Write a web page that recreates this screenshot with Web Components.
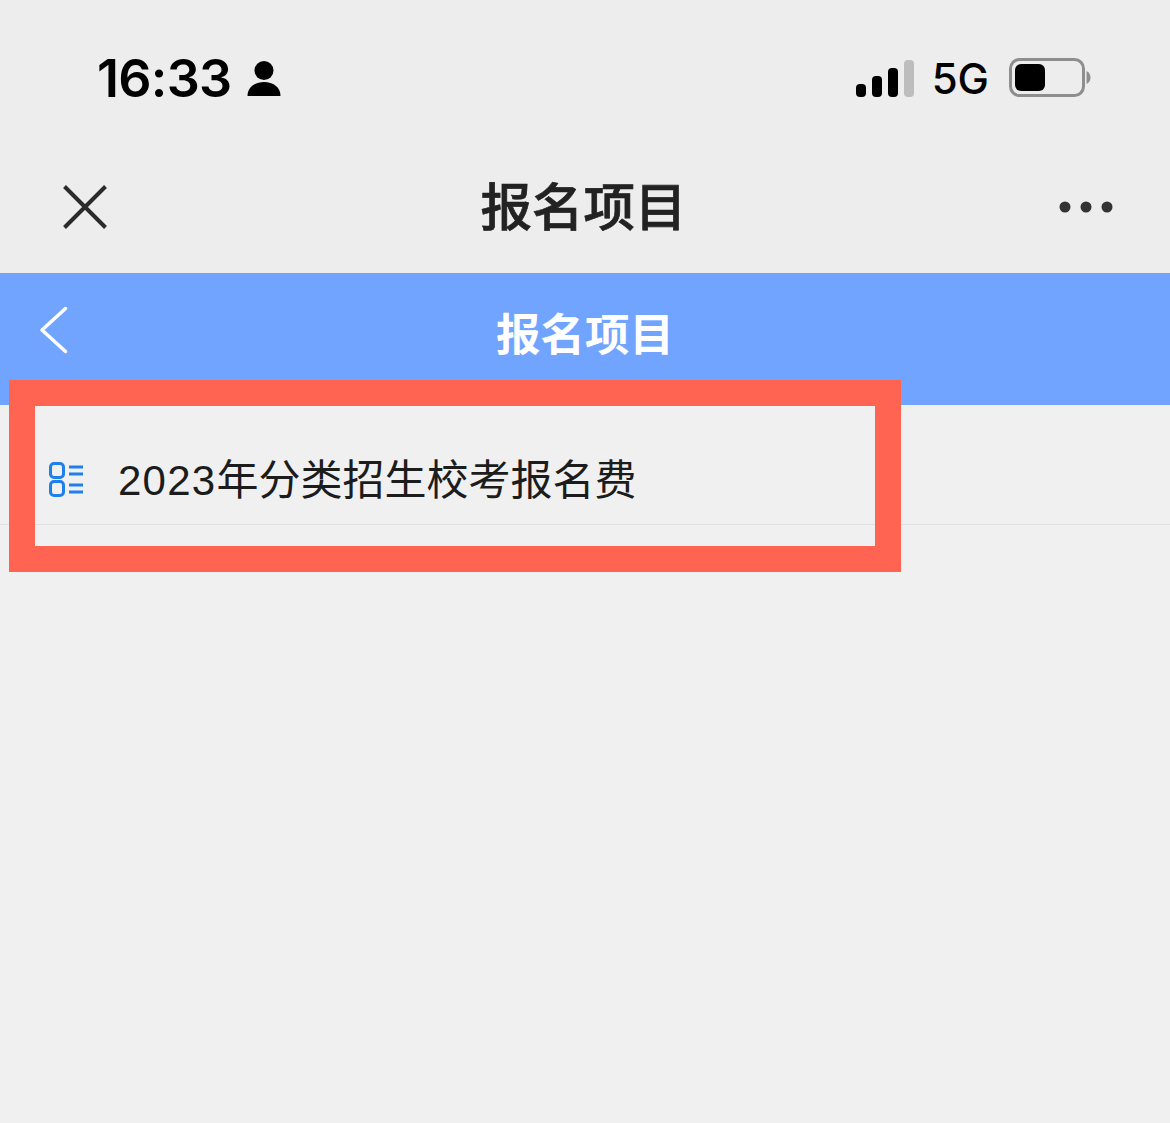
<!DOCTYPE html>
<html lang="zh">
<head>
<meta charset="utf-8">
<title>报名项目</title>
<style>
    html, body { margin: 0; padding: 0; height: 100%; }
    body {
        background: #f0f0f0;
        font-family: "Inter", "Noto Sans CJK SC", sans-serif;
        width: 1170px;
        height: 1123px;
        overflow: hidden;
        position: relative;
    }
    .num { letter-spacing: 1.25px; }
</style>
</head>
<body>
<app-shell>
    <status-bar time="16:33" network="5G"></status-bar>
    <top-nav>报名项目</top-nav>
    <blue-header>报名项目</blue-header>
    <list-row><span class="num">2023</span>年分类招生校考报名费</list-row>
</app-shell>
<mark-box></mark-box>

<script>
class AppShell extends HTMLElement {
    constructor() {
        super();
        this.attachShadow({mode: "open"}).innerHTML = `
        <style>
            :host { display: flex; flex-direction: column; width: 100%; }
        </style>
        <slot></slot>`;
    }
}

class StatusBar extends HTMLElement {
    constructor() {
        super();
        this.attachShadow({mode: "open"});
    }
    connectedCallback() {
        this.shadowRoot.innerHTML = `
        <style>
            :host {
                display: flex;
                align-items: center;
                justify-content: space-between;
                box-sizing: border-box;
                height: 157px;
                padding: 0 79px 0 97px;
                background: #ededed;
                color: #000;
            }
            .left, .right { display: flex; align-items: center; }
            .time { font: 600 52px/1 "Inter", sans-serif; letter-spacing: -0.7px; }
            .user { margin-left: 15px; margin-top: -1px; }
            .net { font: 500 42px/1 "Inter", sans-serif; margin: 0 20px 0 18px; }
            .batt { margin-top: -2px; }
            svg { display: block; }
        </style>
        <div class="left">
            <span class="time">${this.getAttribute("time")}</span>
            <svg class="user" width="34" height="37" viewBox="0 0 34 37">
                <circle cx="17" cy="10.5" r="9.500" fill="#000"/>
                <path d="M0.500 36 C0.500 27 8 22 17 22 C26 22 33.500 27 33.500 36 Z" fill="#000"/>
            </svg>
        </div>
        <div class="right">
            <svg class="bars" width="58" height="38" viewBox="0 0 58 38">
                <rect x="0" y="24" width="10" height="13" rx="4" fill="#000"/>
                <rect x="16" y="16" width="10" height="21" rx="4" fill="#000"/>
                <rect x="32" y="8" width="10" height="29" rx="4" fill="#000"/>
                <rect x="48" y="0" width="10" height="37" rx="4" fill="#bdbdbd"/>
            </svg>
            <span class="net">${this.getAttribute("network")}</span>
            <svg class="batt" width="82" height="40" viewBox="0 0 82 40">
                <rect x="1.500" y="1.500" width="73" height="36" rx="9" fill="none" stroke="#8e8e8e" stroke-width="3"/>
                <rect x="6" y="6" width="30" height="27" rx="6" fill="#000"/>
                <path d="M77.500 13 C80.500 14.500 81.500 17 81.500 19.500 C81.500 22 80.500 24.500 77.500 26 Z" fill="#8e8e8e"/>
            </svg>
        </div>`;
    }
}

class TopNav extends HTMLElement {
    constructor() {
        super();
        this.attachShadow({mode: "open"}).innerHTML = `
        <style>
            :host {
                display: grid;
                grid-template-columns: 1fr auto 1fr;
                align-items: center;
                box-sizing: border-box;
                height: 116px;
                padding: 0 57px 16px 63px;
                background: #ededed;
                color: #222;
            }
            .title {
                font: 500 51.5px/1 "Noto Sans CJK SC", sans-serif;
                -webkit-text-stroke: 0.7px #222;
                margin-left: -9px;
                margin-bottom: 6px;
            }
            .close { margin-top: -1px; }
            .more { justify-self: end; }
            svg { display: block; }
        </style>
        <svg class="close" width="44" height="44" viewBox="0 0 44 44">
            <path d="M1.500 1.500 L42.500 42.500 M42.500 1.500 L1.500 42.500" stroke="#2b2b2b" stroke-width="4" fill="none"/>
        </svg>
        <div class="title"><slot></slot></div>
        <svg class="more" width="54" height="12" viewBox="0 0 54 12">
            <circle cx="6" cy="6" r="5.500" fill="#333"/>
            <circle cx="27" cy="6" r="5.500" fill="#333"/>
            <circle cx="48" cy="6" r="5.500" fill="#333"/>
        </svg>`;
    }
}

class BlueHeader extends HTMLElement {
    constructor() {
        super();
        this.attachShadow({mode: "open"}).innerHTML = `
        <style>
            :host {
                display: grid;
                grid-template-columns: 1fr auto 1fr;
                align-items: center;
                box-sizing: border-box;
                height: 132px;
                padding: 0 39px 8px;
                background: #70a4ff;
                color: #fff;
            }
            .title {
                font: 700 44.500px/1 "Noto Sans CJK SC", sans-serif;
                margin-top: -6px;
            }
            svg { display: block; margin-top: -8px; }
        </style>
        <svg width="30" height="50" viewBox="0 0 30 50">
            <path d="M26.500 2.500 L3 24 L26.500 45.500" stroke="#fff" stroke-width="3.500" stroke-linecap="round" stroke-linejoin="round" fill="none"/>
        </svg>
        <div class="title"><slot></slot></div>`;
    }
}

class ListRow extends HTMLElement {
    constructor() {
        super();
        this.attachShadow({mode: "open"}).innerHTML = `
        <style>
            :host {
                display: flex;
                align-items: center;
                gap: 33px;
                box-sizing: border-box;
                height: 120px;
                padding: 0 0 0 49px;
                border-bottom: 1px solid #e0e0e0;
                color: #1c1c1c;
                font: 400 42px/1 "Liberation Sans", "Noto Sans CJK SC", sans-serif;
            }
            .text { white-space: nowrap; margin-top: 32px; }
            svg { display: block; flex: none; margin-top: 30px; }
        </style>
        <svg width="36" height="36" viewBox="0 0 36 36">
            <g fill="none" stroke="#1f7fec" stroke-width="3">
                <rect x="1.500" y="1.500" width="13" height="14" rx="3.500"/>
                <rect x="1.500" y="19.500" width="13" height="14" rx="3.500"/>
                <path d="M20 5 H34 M20 12 H34 M20 23 H34 M20 30 H34"/>
            </g>
        </svg>
        <div class="text"><slot></slot></div>`;
    }
}

// annotation drawn over the screenshot
class MarkBox extends HTMLElement {
    constructor() {
        super();
        this.attachShadow({mode: "open"}).innerHTML = `
        <style>
            :host {
                display: block;
                position: absolute;
                left: 9px;
                top: 380px;
                width: 892px;
                height: 192px;
                box-sizing: border-box;
                border: 26px solid #ff6452;
            }
        </style>`;
    }
}

customElements.define("app-shell", AppShell);
customElements.define("status-bar", StatusBar);
customElements.define("top-nav", TopNav);
customElements.define("blue-header", BlueHeader);
customElements.define("list-row", ListRow);
customElements.define("mark-box", MarkBox);
</script>
</body>
</html>
